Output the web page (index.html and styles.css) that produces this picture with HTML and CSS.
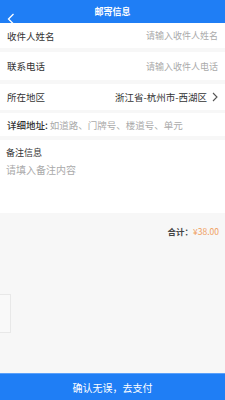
FILE: index.html
```html
<!DOCTYPE html>
<html lang="zh-CN">
<head>
    <meta charset="UTF-8">
    <meta name="viewport" content="width=device-width, initial-scale=1.0">
    <title>邮寄信息</title>
    <link rel="stylesheet" href="styles.css">
</head>
<body>
    <div class="top-bar">
        <span class="back">
            <svg width="8" height="12" viewBox="0 0 8 12"><path d="M6.5 1 L1.5 6 L6.5 11" fill="none" stroke="#fff" stroke-width="1.3"/></svg>
        </span>
        <div class="title">邮寄信息</div>
    </div>
    <div class="page">
        <div class="row row-name">
            <span class="label">收件人姓名</span>
            <span class="value placeholder">请输入收件人姓名</span>
        </div>
        <div class="row row-phone">
            <span class="label">联系电话</span>
            <span class="value placeholder">请输入收件人电话</span>
        </div>
        <div class="row row-area">
            <span class="label">所在地区</span>
            <span class="value area">浙江省-杭州市-西湖区</span>
            <svg class="arrow" width="6" height="10" viewBox="0 0 6 10"><path d="M1 1 L5 5 L1 9" fill="none" stroke="#555" stroke-width="1.1"/></svg>
        </div>
        <div class="row row-addr">
            <span class="label small">详细地址:</span>
            <span class="placeholder small">如道路、门牌号、楼道号、单元</span>
        </div>
        <div class="remark">
            <div class="remark-title">备注信息</div>
            <div class="placeholder remark-input">请填入备注内容</div>
        </div>
        <div class="total">
            <span class="total-label">合计：</span><span class="price">¥38.00</span>
        </div>
        <div class="side-box"></div>
    </div>
    <div class="pay-button">确认无误，去支付</div>
</body>
</html>
```

FILE: styles.css
```css
body {
    font-family: "Noto Sans CJK SC", "Noto Sans", sans-serif;
    margin: 0;
    padding: 0;
    height: 400px;
    display: flex;
    flex-direction: column;
    background: #f7f7f7;
    color: #333;
    overflow: hidden;
}

.top-bar {
    background: #1f7ef5;
    height: 23px;
    display: flex;
    align-items: center;
    justify-content: center;
    position: relative;
    flex-shrink: 0;
}

.back {
    position: absolute;
    left: 7px;
    top: 6px;
}

.title {
    color: #fff;
    font-size: 9px;
    font-weight: bold;
}

.page {
    flex-grow: 1;
    display: flex;
    flex-direction: column;
    background: #f7f7f7;
}

.row {
    background: #fff;
    display: flex;
    align-items: center;
    padding: 0 7px;
    margin-bottom: 4px;
}

.row-name { height: 25px; }
.row-phone { height: 28px; }
.row-area { height: 26px; margin-bottom: 3px; }
.row-addr { height: 23px; }

.label {
    font-size: 9.5px;
    color: #333;
    flex-grow: 1;
}

.label.small {
    flex-grow: 0;
    font-size: 9.5px;
    font-weight: 500;
}

.value {
    font-size: 9px;
}

.placeholder {
    color: #aaa;
}

.placeholder.small {
    font-size: 9.5px;
    margin-left: 2px;
}

.area {
    color: #333;
    font-size: 9.5px;
}

.arrow {
    margin-left: 5px;
}

.remark {
    background: #fff;
    height: 73px;
    padding: 6px 6px 0;
    box-sizing: border-box;
}

.remark-title {
    font-size: 9px;
    color: #333;
}

.remark-input {
    font-size: 10px;
    margin-top: 3px;
}

.total {
    text-align: right;
    padding: 12px 6px 0 0;
    font-size: 8.5px;
}

.total-label {
    font-weight: bold;
    color: #444;
}

.price {
    color: #f0a060;
}

.side-box {
    width: 10px;
    height: 37px;
    margin-top: 57px;
    background: #f9f9f9;
    border: 1px solid #e8e8e8;
    border-left: none;
}

.pay-button {
    background: #1f7ef5;
    border-top: 1px solid #5aa0fa;
    height: 26px;
    flex-shrink: 0;
    color: #fff;
    font-size: 10px;
    display: flex;
    align-items: center;
    justify-content: center;
}
```
